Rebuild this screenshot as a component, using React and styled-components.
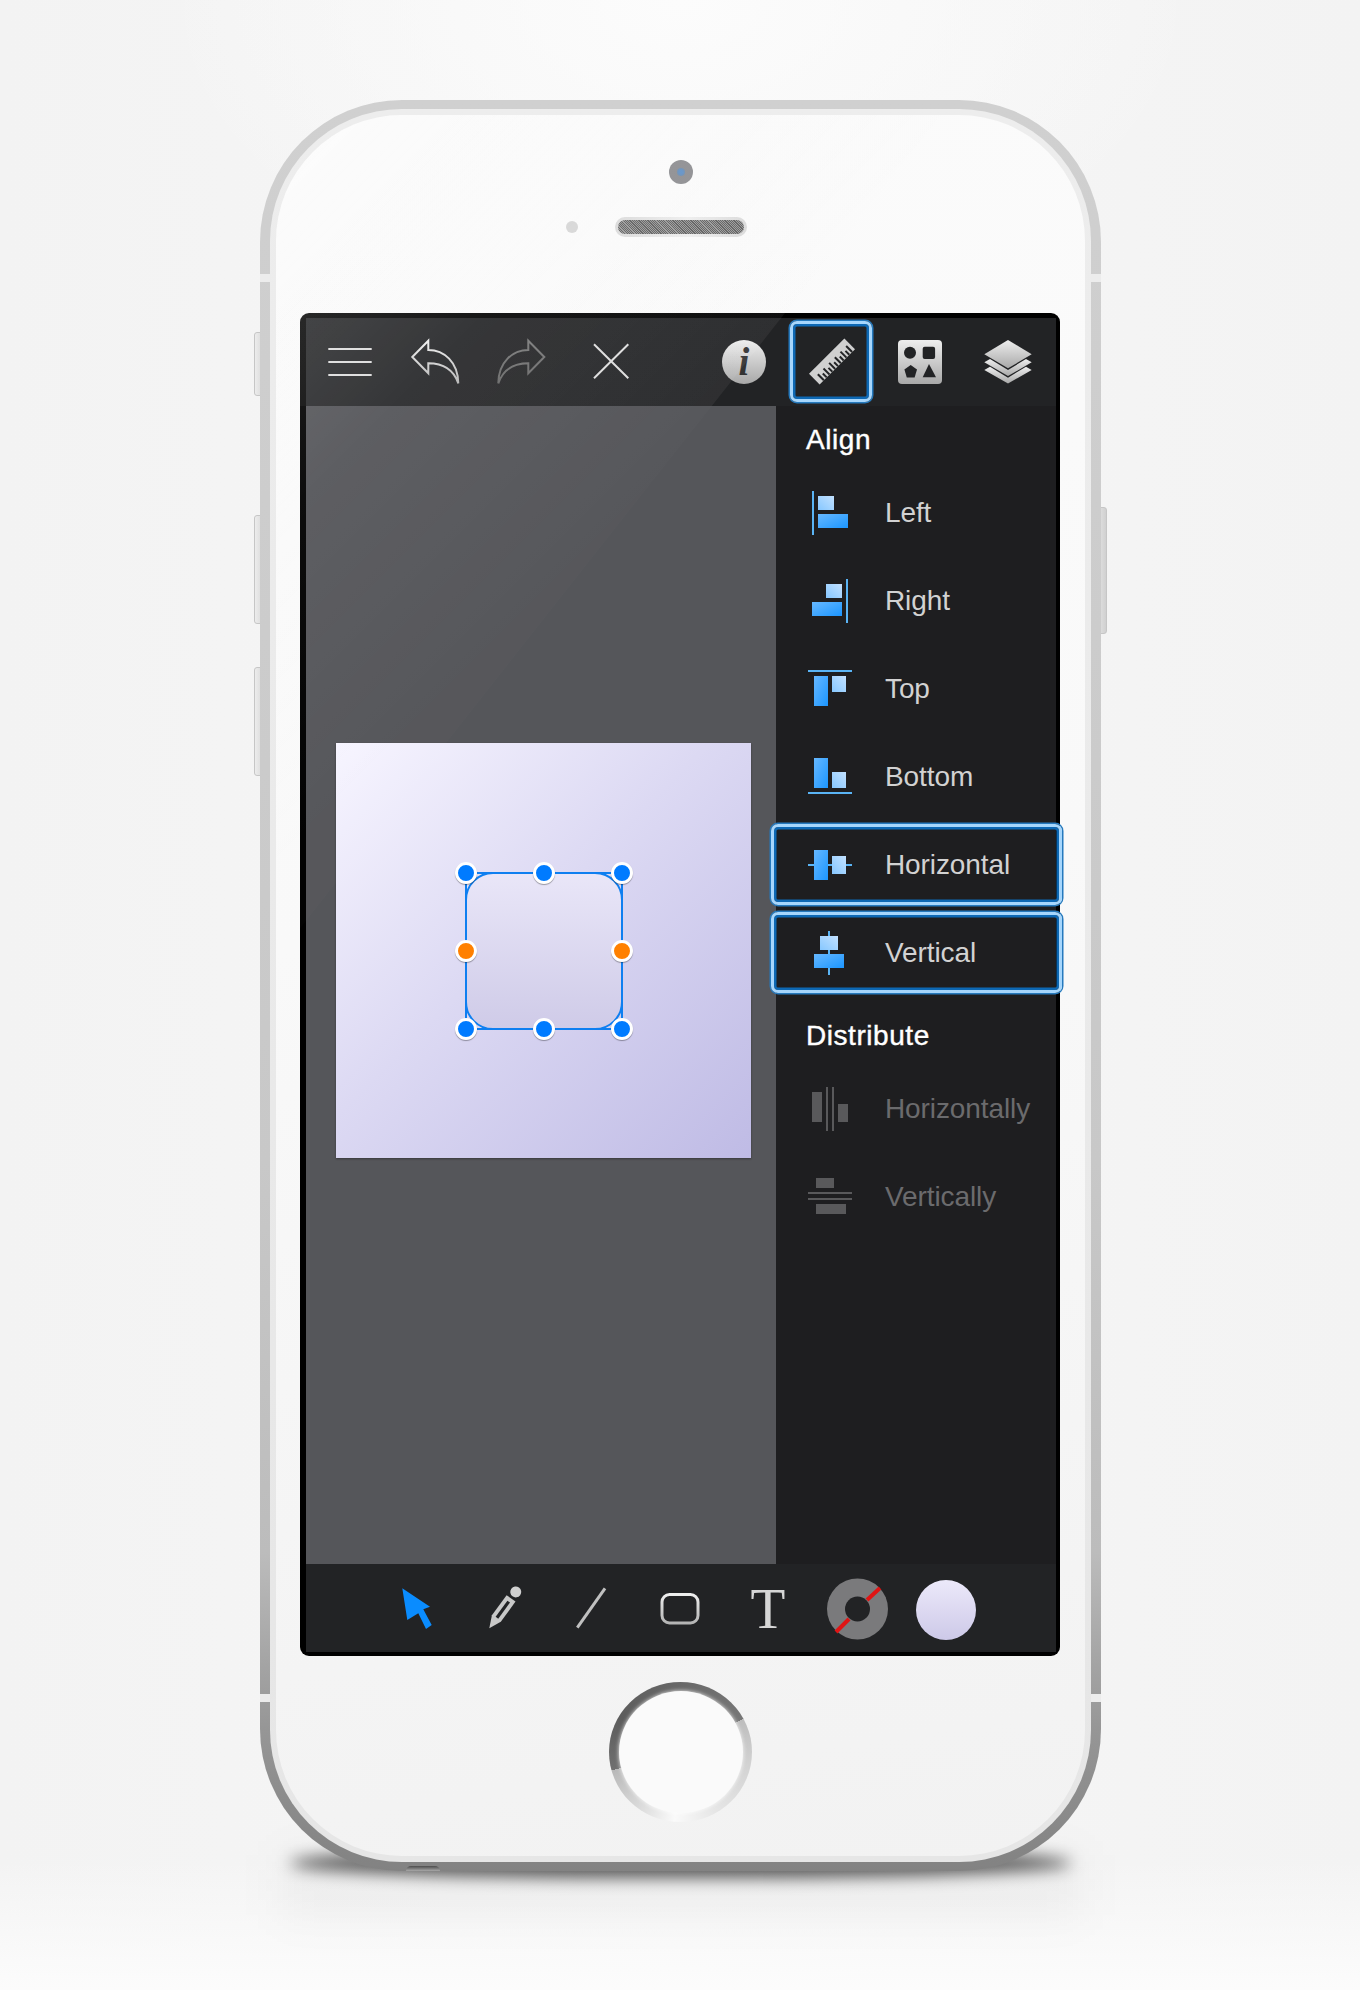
import React from 'react';
import styled, { createGlobalStyle, css } from 'styled-components';

const GlobalStyle = createGlobalStyle`
  html, body {
    margin: 0;
    padding: 0;
  }
  body {
    font-family: 'Liberation Sans', Arial, sans-serif;
  }
`;

const highlight = css`
  border: 3px solid #a6d6fc;
  border-radius: 7px;
  box-shadow: 0 0 0 1.5px #2579bd, inset 0 0 0 2.5px #0d68b4;
  box-sizing: border-box;
  pointer-events: none;
`;

const Page = styled.div`
  position: relative;
  width: 1360px;
  height: 1990px;
  padding: 100px 0 0 260px;
  box-sizing: border-box;
  overflow: hidden;
  background:
    radial-gradient(ellipse 520px 320px at 50% 0, #fcfcfc, rgba(252, 252, 252, 0)),
    linear-gradient(0deg, #fcfcfc 0, rgba(252, 252, 252, 0) 130px),
    linear-gradient(90deg, #f3f3f3, #f6f6f6 50%, #f3f3f3);
`;

const PhoneWrap = styled.div`
  position: relative;
  z-index: 0;
  width: 841px;
  height: 1771px;
`;

const GroundShadow = styled.div`
  position: absolute;
  z-index: -1;
  left: 30px;
  right: 30px;
  bottom: -7px;
  height: 30px;
  border-radius: 50%/60%;
  background: rgba(0, 0, 0, 0.62);
  filter: blur(8px);
`;

const Reflection = styled.div`
  position: absolute;
  z-index: -2;
  left: 20px;
  right: 20px;
  bottom: -44px;
  height: 60px;
  background: rgba(0, 0, 0, 0.04);
  filter: blur(22px);
`;

const SideButton = styled.div`
  position: absolute;
  z-index: -1;
  top: ${(p) => p.$top}px;
  height: ${(p) => p.$height}px;
  ${(p) => (p.$right ? 'right: -6px;' : 'left: -6px;')}
  width: 14px;
  border: 1px solid #c6c6c6;
  border-radius: 3px;
  box-sizing: border-box;
  background: linear-gradient(90deg, #ececec, #d0d0d0);
`;

const Metal = styled.div`
  width: 100%;
  height: 100%;
  padding: 9px 10px;
  box-sizing: border-box;
  border-radius: 142px;
  background: linear-gradient(180deg, #d0d0d0 0, #c8c8c8 60%, #bcbcbc 82%, #969696 92%, #828282 100%);
`;

const Band = styled.div`
  position: absolute;
  top: ${(p) => p.$top}px;
  ${(p) => (p.$right ? 'right: 0;' : 'left: 0;')}
  width: 10px;
  height: 8px;
  background: #ececec;
`;

const PortNotch = styled.div`
  position: absolute;
  left: 146px;
  bottom: 0;
  width: 34px;
  height: 5px;
  border-radius: 17px 17px 0 0;
  background: linear-gradient(180deg, #4d4d4d, #a8a8a8);
`;

const Rim = styled.div`
  height: 100%;
  padding: 6px;
  box-sizing: border-box;
  border-radius: 132px;
  background: linear-gradient(180deg, #ededed, #e6e6e6);
`;

const Face = styled.div`
  position: relative;
  height: 100%;
  padding-top: 45px;
  box-sizing: border-box;
  display: flex;
  flex-direction: column;
  align-items: center;
  border-radius: 126px;
  background: linear-gradient(172deg, #fbfbfb 0, #f9f9f9 45%, #f2f2f2 100%);
`;

const Glare = styled.div`
  position: absolute;
  z-index: 2;
  left: 0;
  top: 0;
  width: 670px;
  height: 850px;
  border-top-left-radius: 126px;
  pointer-events: none;
  clip-path: polygon(0 0, 665px 0, 0 844px);
  background:
    linear-gradient(180deg, rgba(255, 255, 255, 0.045) 0, rgba(255, 255, 255, 0.045) 291px, transparent 291px),
    linear-gradient(135deg, rgba(255, 255, 255, 0.2) 0, rgba(255, 255, 255, 0.05) 27%, rgba(255, 255, 255, 0.01) 50%);
`;

const Camera = styled.div`
  width: 24px;
  height: 24px;
  border-radius: 50%;
  display: grid;
  place-items: center;
  background: #8b8c8f;
  &::after {
    content: '';
    width: 8px;
    height: 8px;
    border-radius: 50%;
    background: radial-gradient(circle, #5d8fc6 30%, #76889c);
  }
`;

const SpeakerRow = styled.div`
  width: 100%;
  margin-top: 33px;
  display: grid;
  grid-template-columns: 1fr auto 1fr;
  align-items: center;
`;

const Sensor = styled.div`
  justify-self: end;
  width: 12px;
  height: 12px;
  margin-right: 37px;
  border-radius: 50%;
  background: #d6d6d6;
`;

const Speaker = styled.div`
  width: 132px;
  height: 20px;
  padding: 3px;
  box-sizing: border-box;
  border-radius: 10px;
  background: linear-gradient(90deg, #dadada, #eeeeee 55%, #dadada);
  &::after {
    content: '';
    display: block;
    height: 100%;
    border-radius: 7px;
    background: repeating-linear-gradient(45deg, #5c5c5c 0 0.8px, #9a9a9a 0.8px 1.6px);
  }
`;

const ScreenFrame = styled.div`
  align-self: flex-start;
  margin: 76px 0 0 24px;
  width: 760px;
  padding: 5px 4px 4px 6px;
  box-sizing: border-box;
  border-radius: 9px;
  background: #000;
`;

const TopBar = styled.div`
  height: 88px;
  padding-right: 4px;
  display: flex;
  justify-content: space-between;
  background: #222325;
`;

const ToolGroup = styled.div`
  display: flex;
`;

const ToolCell = styled.div`
  position: relative;
  width: 88px;
  height: 88px;
  flex: none;
  svg {
    display: block;
  }
  ${(p) =>
    p.$active &&
    css`
      &::after {
        content: '';
        position: absolute;
        inset: 3px 4px 4px 2px;
        ${highlight}
      }
    `}
`;

const Main = styled.div`
  height: 1158px;
  display: flex;
`;

const Canvas = styled.div`
  width: 470px;
  padding: 337px 0 0 30px;
  box-sizing: border-box;
  background: #55565a;
`;

const Artboard = styled.div`
  width: 415px;
  height: 415px;
  display: grid;
  place-items: center;
  background: linear-gradient(135deg, #f7f5ff 0, #dcd9f3 45%, #bfbbe5 100%);
  box-shadow: 0 1px 2px rgba(0, 0, 0, 0.35);
`;

const Selection = styled.div`
  position: relative;
  width: 156px;
  height: 156px;
  &::before {
    content: '';
    position: absolute;
    inset: -1px;
    border: 2px solid #0f7ff0;
  }
`;

const SelectedShape = styled.div`
  position: relative;
  width: 158px;
  height: 158px;
  margin: -1px;
  border-radius: 28px;
  box-sizing: border-box;
  border: 2px solid #0f7ff0;
  background: linear-gradient(180deg, #e9e6f8, #cfcbe8);
`;

const Handle = styled.div`
  position: absolute;
  left: ${(p) => p.$x}%;
  top: ${(p) => p.$y}%;
  width: 22px;
  height: 22px;
  margin: -11px 0 0 -11px;
  box-sizing: border-box;
  border: 3px solid #fff;
  border-radius: 50%;
  background: ${(p) => (p.$orange ? '#ff8000' : '#007bff')};
  box-shadow: 0 1px 1px rgba(0, 0, 0, 0.35);
`;

const Sidebar = styled.div`
  width: 280px;
  background: #1e1e20;
`;

const SectionTitle = styled.div`
  height: ${(p) => p.$height}px;
  padding: ${(p) => p.$top}px 0 0 30px;
  box-sizing: border-box;
  font-size: 28px;
  line-height: 40px;
  letter-spacing: 0.55px;
  color: #fff;
  -webkit-text-stroke: 0.4px #fff;
`;

const Row = styled.div`
  position: relative;
  height: 88px;
  padding-left: 32px;
  display: flex;
  align-items: center;
  gap: 33px;
  svg {
    flex: none;
  }
  ${(p) =>
    p.$active &&
    css`
      &::after {
        content: '';
        position: absolute;
        inset: 3px -6px 4px -5px;
        ${highlight}
      }
    `}
`;

const RowLabel = styled.span`
  font-size: 28px;
  letter-spacing: -0.1px;
  color: ${(p) => (p.$muted ? '#6b6b6d' : '#d2d2d2')};
`;

const BottomBar = styled.div`
  height: 88px;
  padding-right: 2px;
  display: flex;
  justify-content: center;
  background: #222325;
`;

const HomeButton = styled.div`
  margin-top: 26px;
  width: 143px;
  height: 140px;
  border-radius: 50%;
  display: grid;
  place-items: center;
  background: conic-gradient(
    #686868 0,
    #777 62deg,
    #bdbdbd 62deg,
    #d2d2d2 100deg,
    #e6e6e6 150deg,
    #fafafa 185deg,
    #dcdcdc 215deg,
    #b8b8b8 255deg,
    #707070 255deg,
    #5c5c5c 300deg,
    #686868 360deg
  );
  &::after {
    content: '';
    width: 124px;
    height: 122px;
    border-radius: 50%;
    background: #fafafa;
    box-shadow: 0 0 4px rgba(255, 255, 255, 0.9);
  }
`;

const GradientDefs = styled.svg`
  position: absolute;
  width: 0;
  height: 0;
`;

const LINE = '#5ab4f5';
const DARK = 'url(#boxDark)';
const LIGHT = 'url(#boxLight)';
const MUTED = '#59595b';

// every icon is a list of [x, y, w, h, fill] in a 44px square
const alignIcons = {
  left: [[4, 0, 2, 44, LINE], [10, 5, 16, 14, LIGHT], [10, 23, 30, 14, DARK]],
  right: [[38, 0, 2, 44, LINE], [18, 5, 16, 14, LIGHT], [4, 23, 30, 14, DARK]],
  top: [[0, 3, 44, 2, LINE], [6, 9, 14, 30, DARK], [24, 9, 14, 16, LIGHT]],
  bottom: [[0, 37, 44, 2, LINE], [6, 3, 14, 30, DARK], [24, 17, 14, 16, LIGHT]],
  horizontal: [[0, 21, 44, 2, LINE], [6, 7, 14, 30, DARK], [24, 13, 14, 18, LIGHT]],
  vertical: [[20, 0, 2, 44, LINE], [12, 5, 18, 14, LIGHT], [6, 23, 30, 14, DARK]],
  distH: [[4, 5, 10, 30, MUTED], [18, 0, 2, 44, MUTED], [24, 0, 2, 44, MUTED], [30, 17, 10, 18, MUTED]],
  distV: [[8, 3, 18, 10, MUTED], [0, 17, 44, 2, MUTED], [0, 23, 44, 2, MUTED], [8, 29, 30, 10, MUTED]],
};

const alignRows = [
  { icon: 'left', label: 'Left' },
  { icon: 'right', label: 'Right' },
  { icon: 'top', label: 'Top' },
  { icon: 'bottom', label: 'Bottom' },
  { icon: 'horizontal', label: 'Horizontal', active: true },
  { icon: 'vertical', label: 'Vertical', active: true },
];

const distributeRows = [
  { icon: 'distH', label: 'Horizontally' },
  { icon: 'distV', label: 'Vertically' },
];

const handles = [
  { x: 0, y: 0 },
  { x: 50, y: 0 },
  { x: 100, y: 0 },
  { x: 0, y: 50, orange: true },
  { x: 100, y: 50, orange: true },
  { x: 0, y: 100 },
  { x: 50, y: 100 },
  { x: 100, y: 100 },
];

const AlignIcon = ({ name }) => (
  <svg width="44" height="44" viewBox="0 0 44 44">
    {alignIcons[name].map(([x, y, w, h, fill], i) => (
      <rect key={i} x={x} y={y} width={w} height={h} fill={fill} />
    ))}
  </svg>
);

const Tool = ({ active, children }) => (
  <ToolCell $active={active}>
    <svg width="88" height="88" viewBox="0 0 88 88">
      {children}
    </svg>
  </ToolCell>
);

const arrowPath = 'M18.3 39 L34.3 22.7 V32 C50 32 64 44 64.3 65.3 C60 53 50 45.3 34.3 45.3 V55.3 Z';

const rulerTicks = Array.from({ length: 11 }, (_, i) => -20 + i * 4);

function App() {
  return (
    <Page>
      <GlobalStyle />
      <GradientDefs>
        <defs>
          <linearGradient id="metal" x1="0" y1="0" x2="0" y2="1">
            <stop offset="0" stopColor="#eeeeee" />
            <stop offset="1" stopColor="#a8a8a8" />
          </linearGradient>
          <linearGradient id="boxDark" x1="0" y1="0" x2="1" y2="1">
            <stop offset="0" stopColor="#66b8ff" />
            <stop offset="1" stopColor="#1c96ff" />
          </linearGradient>
          <linearGradient id="boxLight" x1="1" y1="0" x2="0" y2="1">
            <stop offset="0" stopColor="#c2e1ff" />
            <stop offset="1" stopColor="#86c7ff" />
          </linearGradient>
          <linearGradient id="stroke" x1="0" y1="0" x2="0" y2="1">
            <stop offset="0" stopColor="#eeeeee" />
            <stop offset="1" stopColor="#b4b4b4" />
          </linearGradient>
          <linearGradient id="strokeDim" x1="0" y1="0" x2="0" y2="1">
            <stop offset="0" stopColor="#787878" />
            <stop offset="1" stopColor="#666" />
          </linearGradient>
          <linearGradient id="swatch" x1="0" y1="0" x2="0" y2="1">
            <stop offset="0" stopColor="#ece9fa" />
            <stop offset="1" stopColor="#cdc9e8" />
          </linearGradient>
        </defs>
      </GradientDefs>

      <PhoneWrap>
        <Reflection />
        <GroundShadow />
        <SideButton $top={232} $height={64} />
        <SideButton $top={415} $height={109} />
        <SideButton $top={567} $height={109} />
        <SideButton $right $top={407} $height={127} />

        <Metal>
          <Rim>
            <Face>
              <Glare />
              <Camera />
              <SpeakerRow>
                <Sensor />
                <Speaker />
              </SpeakerRow>

              <ScreenFrame>
                <TopBar>
                  <ToolGroup>
                    <Tool>
                      <g stroke="#dcdcdc" strokeWidth="2">
                        <line x1="22.3" y1="31" x2="65.7" y2="31" />
                        <line x1="22.3" y1="44" x2="65.7" y2="44" />
                        <line x1="22.3" y1="57" x2="65.7" y2="57" />
                      </g>
                    </Tool>
                    <Tool>
                      <path d={arrowPath} fill="none" stroke="url(#stroke)" strokeWidth="2" />
                    </Tool>
                    <Tool>
                      <path d={arrowPath} transform="translate(80.6 0) scale(-1 1)" fill="none" stroke="url(#strokeDim)" strokeWidth="2" />
                    </Tool>
                    <Tool>
                      <g stroke="#dedede" strokeWidth="2">
                        <line x1="24" y1="26.3" x2="58.3" y2="60.3" />
                        <line x1="58.3" y1="26.3" x2="24" y2="60.3" />
                      </g>
                    </Tool>
                  </ToolGroup>
                  <ToolGroup>
                    <Tool>
                      <circle cx="44" cy="44" r="22" fill="url(#metal)" />
                      <text x="44" y="57" textAnchor="middle" fontFamily="'Liberation Serif', serif" fontStyle="italic" fontWeight="700" fontSize="39" fill="#333">
                        i
                      </text>
                    </Tool>
                    <Tool active>
                      <g transform="translate(44 43.5) rotate(-45)">
                        <rect x="-25" y="-7.5" width="50" height="15" fill="#d0d0d0" />
                        {rulerTicks.map((x, i) => (
                          <rect key={x} x={x} y={i % 2 ? 2 : -1} width="2" height={i % 2 ? 5.5 : 8.5} fill="#222325" />
                        ))}
                      </g>
                    </Tool>
                    <Tool>
                      <rect x="22" y="22" width="44" height="44" rx="4" fill="url(#metal)" />
                      <g fill="#222325">
                        <circle cx="34" cy="34.7" r="6" />
                        <rect x="46.7" y="28.7" width="12.4" height="12.4" rx="2" />
                        <polygon points="34.7,47 41,51.6 38.6,59.4 30.8,59.4 28.4,51.6" />
                        <polygon points="53,46 46.7,59.3 60,59.3" />
                      </g>
                    </Tool>
                    <Tool>
                      <g fill="url(#metal)">
                        <polygon points="44,22 67.7,36.3 44,50.3 20.3,36.3" />
                        <polygon points="20.3,44.3 26,41 44,52 62,41 67.7,44.3 44,58" />
                        <polygon points="20.3,52 26,48.7 44,59.7 62,48.7 67.7,52 44,65.5" />
                      </g>
                    </Tool>
                  </ToolGroup>
                </TopBar>

                <Main>
                  <Canvas>
                    <Artboard>
                      <Selection>
                        <SelectedShape />
                        {handles.map((h) => (
                          <Handle key={`${h.x}-${h.y}`} $x={h.x} $y={h.y} $orange={h.orange} />
                        ))}
                      </Selection>
                    </Artboard>
                  </Canvas>

                  <Sidebar>
                    <SectionTitle $height={63} $top={14}>
                      Align
                    </SectionTitle>
                    {alignRows.map((r) => (
                      <Row key={r.label} $active={r.active}>
                        <AlignIcon name={r.icon} />
                        <RowLabel>{r.label}</RowLabel>
                      </Row>
                    ))}
                    <SectionTitle $height={68} $top={19}>
                      Distribute
                    </SectionTitle>
                    {distributeRows.map((r) => (
                      <Row key={r.label}>
                        <AlignIcon name={r.icon} />
                        <RowLabel $muted>{r.label}</RowLabel>
                      </Row>
                    ))}
                  </Sidebar>
                </Main>

                <BottomBar>
                  <Tool>
                    <polygon points="30.3,24.3 58,42.7 51.3,45.3 59.7,61 54,65 46.3,49.3 35.3,56" fill="#0a8cff" />
                  </Tool>
                  <Tool>
                    <g transform="translate(29.3 64.3) rotate(36)">
                      <path d="M0 0 L-5.5 -12 V-37 H5.5 V-12 Z" fill="#c8c8c8" />
                      <rect x="-1.6" y="-33" width="3.2" height="20" fill="#222325" />
                      <circle cx="0" cy="-45" r="5.5" fill="#d0d0d0" />
                    </g>
                  </Tool>
                  <Tool>
                    <line x1="57" y1="24.3" x2="29.3" y2="63.7" stroke="#c0c0c0" strokeWidth="3" />
                  </Tool>
                  <Tool>
                    <rect x="26" y="30.5" width="36" height="28.5" rx="7.5" fill="none" stroke="url(#stroke)" strokeWidth="3" />
                  </Tool>
                  <Tool>
                    <text x="44" y="64" textAnchor="middle" fontFamily="'Liberation Serif', serif" fontSize="57" fill="#d6d6d6">
                      T
                    </text>
                  </Tool>
                  <Tool>
                    <circle cx="45.5" cy="45" r="30.5" fill="#7a7a7c" />
                    <circle cx="45.5" cy="45" r="12.5" fill="#222325" />
                    <g stroke="#e01414" strokeWidth="4">
                      <line x1="68" y1="24" x2="55" y2="36" />
                      <line x1="37" y1="55" x2="24" y2="68" />
                    </g>
                  </Tool>
                  <Tool>
                    <circle cx="46" cy="46" r="30" fill="url(#swatch)" />
                  </Tool>
                </BottomBar>
              </ScreenFrame>

              <HomeButton />
            </Face>
          </Rim>
        </Metal>

        <Band $top={174} />
        <Band $right $top={174} />
        <Band $top={1594} />
        <Band $right $top={1594} />
        <PortNotch />
      </PhoneWrap>
    </Page>
  );
}

export default App;
